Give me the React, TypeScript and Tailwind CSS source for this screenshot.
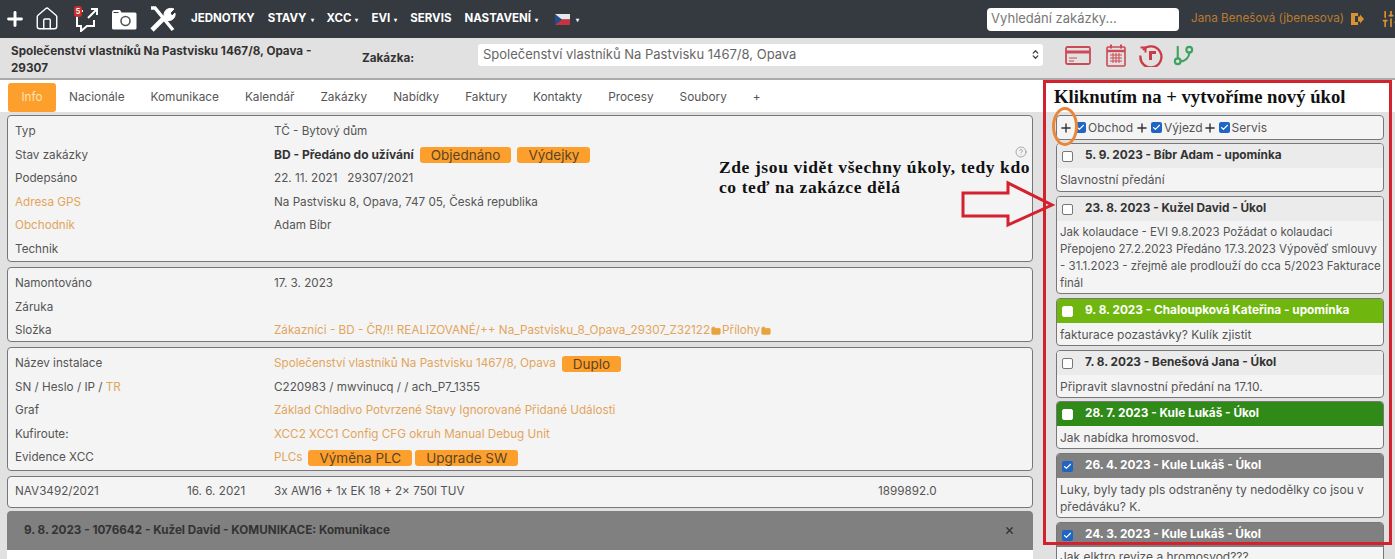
import { Plus, Home, ChevronsUpDown, SlidersVertical, GitBranch, Folder, X, Check, CircleHelp } from "lucide-react"

const NAV = [
  { label: "JEDNOTKY" },
  { label: "STAVY", caret: true },
  { label: "XCC", caret: true },
  { label: "EVI", caret: true },
  { label: "SERVIS" },
  { label: "NASTAVENÍ", caret: true },
]

const TABS = ["Nacionále", "Komunikace", "Kalendář", "Zakázky", "Nabídky", "Faktury", "Kontakty", "Procesy", "Soubory", "+"]

const TASKS = [
  { title: "5. 9. 2023 - Bíbr Adam - upomínka", body: "Slavnostní předání", head: "bg-[#ebebeb] text-[#333]", box: "h-[49px] mb-[1px] text-[12px]" },
  {
    title: "23. 8. 2023 - Kužel David - Úkol",
    body: "Jak kolaudace - EVI 9.8.2023 Požádat o kolaudaci\nPřepojeno 27.2.2023 Předáno 17.3.2023 Výpověď smlouvy\n- 31.1.2023 - zřejmě ale prodlouží do cca 5/2023 Fakturace\nfinál",
    head: "bg-[#ebebeb] text-[#333]",
    box: "h-[98px] mb-[1px] text-[11.5px]",
  },
  { title: "9. 8. 2023 - Chaloupková Kateřina - upomínka", body: "fakturace pozastávky? Kulík zjistit", head: "bg-[#6fb70f] text-white", box: "h-[48px] mb-[1px] text-[12px]", solid: true },
  { title: "7. 8. 2023 - Benešová Jana - Úkol", body: "Připravit slavnostní předání na 17.10.", head: "bg-[#ebebeb] text-[#333]", box: "h-[48px] text-[12px]" },
  { title: "28. 7. 2023 - Kule Lukáš - Úkol", body: "Jak nabídka hromosvod.", head: "bg-[#2f8a17] text-white", box: "h-[48px] mb-[1px] text-[12px]", solid: true },
  { title: "26. 4. 2023 - Kule Lukáš - Úkol", body: "Luky, byly tady pls odstraněny ty nedodělky co jsou v\npředáváku? K.", head: "bg-[#808080] text-white", box: "h-[65px] mb-[1px] text-[12px]", checked: true },
  { title: "24. 3. 2023 - Kule Lukáš - Úkol", body: "Jak elktro revize a hromosvod???", head: "bg-[#808080] text-white", box: "h-[48px] text-[12px]", checked: true, pad: "pt-[1px]" },
]

function Btn({ children, tight }: { children: React.ReactNode; tight?: boolean }) {
  return <span className={`${tight ? "ml-[3px]" : "ml-[6px]"} rounded-[3px] bg-[#fd9f2d] px-[11px] text-[13.5px] leading-[16px] text-[#5a4524]`}>{children}</span>
}

function Row({ label, children }: { label: React.ReactNode; children?: React.ReactNode }) {
  return (
    <div className="flex h-[23.6px] items-center">
      <div className="w-[259px] shrink-0">{label}</div>
      <div className="flex items-center">{children}</div>
    </div>
  )
}

function Panel({ h, children }: { h: string; children: React.ReactNode }) {
  return <div className={`rounded-[4px] border border-[#777] bg-[#f4f4f4] px-[7px] pt-[4px] ${h}`}>{children}</div>
}

function FolderIcon() {
  return <Folder size={10} className="mx-[1px] inline fill-[#e8a33d] text-[#e8a33d]" />
}

function Blue() {
  return (
    <span className="flex h-[11px] w-[11px] shrink-0 items-center justify-center rounded-[2px] bg-[#1f66c4]">
      <Check size={9} strokeWidth={3} className="text-white" />
    </span>
  )
}

function FilterItem({ label, className }: { label: string; className: string }) {
  return (
    <>
      <Plus size={14} strokeWidth={2.4} className={`text-[#333] ${className}`} />
      <span className="ml-[2px]"><Blue /></span>
      <span className="ml-[2px]">{label}</span>
    </>
  )
}

export default function App() {
  return (
    <div className="relative h-[559px] w-[1395px] overflow-hidden bg-[#e1e1e1] text-[11.7px] text-[#555] [font-family:Inter,'Liberation_Sans',sans-serif]">
      {/* Top bar */}
      <div className="flex h-[38px] items-center bg-[#343a40] pl-[4px] text-white">
        <Plus size={22} strokeWidth={3.2} />
        <Home size={26} strokeWidth={1.3} className="ml-[8px]" />
        <div className="relative ml-[14px]">
          <svg width="26" height="26" viewBox="0 0 26 26" fill="none" stroke="#fff" strokeWidth="2">
            <path d="M9 5H3v15h4v5l6-5h7v-6" />
            <path d="M14 12 23 3M17 3h6v6" />
          </svg>
          <span className="absolute left-[0px] top-[0px] flex h-[11px] w-[8px] items-center justify-center rounded-[3px] bg-[#c9302c] text-[7px] font-bold leading-none">5</span>
        </div>
        <svg width="26" height="21" viewBox="0 0 26 21" className="ml-[11px]">
          <path d="M1 3.500 Q1 1 3 1h6l1.500 2.500H24q1.500 0 1.500 1.500V19q0 1.500-1.500 1.500H2.500Q1 20.500 1 19z" fill="#fff" />
          <path d="M2.500 3.500h5" stroke="#343a40" strokeWidth="1" />
          <circle cx="14.500" cy="12" r="4.500" fill="none" stroke="#555" strokeWidth="1.600" />
        </svg>
        <svg width="27" height="27" viewBox="0 0 27 27" className="ml-[12px]" fill="none" stroke="#fff">
          <path d="M2 2l4 0 18 22" strokeWidth="3.400" />
          <path d="M3 24 16 11" strokeWidth="4.600" />
          <path d="M15 9c0-5 5-8 10-6l-4 4 2 3 3-3c1 6-5 9-9 7z" fill="#fff" strokeWidth="1" />
        </svg>
        <nav className="ml-[15px] flex items-center gap-[13px] text-[11.5px] font-bold">
          {NAV.map((n) => (
            <span key={n.label} className="flex items-center gap-[4px]">
              {n.label}
              {n.caret && <span className="text-[6px]">▾</span>}
            </span>
          ))}
          <span className="ml-[4px] flex items-center gap-[6px]">
            <svg width="15" height="11" viewBox="0 0 15 11">
              <rect width="15" height="5.500" fill="#e8e8e8" />
              <rect y="5.500" width="15" height="5.500" fill="#c8323c" />
              <path d="M0 0l7 5.500-7 5.500z" fill="#1d4e8f" />
            </svg>
            <span className="text-[6px]">▾</span>
          </span>
        </nav>
        <div className="ml-auto flex items-center">
          <div className="flex h-[23px] w-[192px] items-center rounded-[4px] bg-white pl-[4px] text-[13px] text-[#777]">Vyhledání zakázky...</div>
          <span className="ml-[12px] text-[11.7px] text-[#b97a30]">Jana Benešová (jbenesova)</span>
          <svg width="14" height="14" viewBox="0 0 14 14" fill="#d9922f" className="ml-[6px]">
            <path d="M1 1h7v3H5v6h3v3H1zM8 4.500h2V2.500l4 4.500-4 4.500v-2H8z" />
          </svg>
          <SlidersVertical size={20} className="ml-[17px] mr-[-6px] text-[#d9922f]" />
        </div>
      </div>

      {/* Job header */}
      <div className="flex h-[42px] items-center border-b-2 border-[#aaa] bg-[#e1e1e1] pl-[11px]">
        <div className="mt-[4px] w-[315px] font-bold leading-[17px] text-[#333]">Společenství vlastníků Na Pastvisku 1467/8, Opava - 29307</div>
        <div className="ml-[36px] mt-[2px] w-[116px] font-bold text-[#333]">Zakázka:</div>
        <div className="mb-[7px] flex h-[22px] w-[565px] items-center justify-between rounded-[3px] bg-white pl-[5px] pr-[2px] text-[13px] text-[#666]">
          Společenství vlastníků Na Pastvisku 1467/8, Opava
          <ChevronsUpDown size={11} className="text-[#444]" strokeWidth={3} />
        </div>
        <div className="mb-[6px] ml-[22px] flex items-center">
          <svg width="26" height="19" viewBox="0 0 26 19" fill="none" stroke="#cc4a55" strokeWidth="1.800">
            <rect x="1" y="1" width="24" height="17" rx="1.500" />
            <path d="M1 6h24" strokeWidth="3" />
            <path d="M4 12h8M4 15h5" strokeWidth="1.200" />
          </svg>
          <svg width="20" height="23" viewBox="0 0 20 23" fill="none" stroke="#cc4a55" strokeWidth="1.600" className="ml-[15px]">
            <rect x="1" y="3" width="18" height="19" rx="1" />
            <path d="M1 7h18" strokeWidth="2.400" />
            <path d="M5 0.500v4M15 0.500v4" strokeWidth="2" />
            <path d="M4 11h12M4 14h12M4 17h12M7 9v10M10 9v10M13 9v10" strokeWidth="1" />
          </svg>
          <svg width="24" height="24" viewBox="0 0 24 24" fill="none" stroke="#cc3a45" strokeWidth="2.300" className="ml-[13px]">
            <path d="M4 7a10.500 10.500 0 1 1-2.500 5.500" />
            <path d="M1.500 4.500h5v5" strokeWidth="2" />
            <path d="M17 9.500h-5.500v7.500" strokeWidth="3" />
          </svg>
          <GitBranch size={23} strokeWidth={2.200} className="ml-[9px] text-[#3da35d]" />
        </div>
      </div>

      {/* Body */}
      <div className="flex">
        <div className="w-[1043px] shrink-0">
          <div className="flex h-[32px] items-end bg-white pl-[8px]">
            <div className="flex h-[29px] w-[48px] items-center justify-center rounded-[3px] bg-[#fd9f2d] text-[#fde2b5]">Info</div>
            <div className="ml-[13px] flex h-[29px] items-center gap-[26px] text-[11.8px] text-[#555]">
              {TABS.map((t) => (
                <span key={t}>{t}</span>
              ))}
            </div>
          </div>
          <div className="flex flex-col gap-[5px] pl-[7px] pr-[10px] pt-[3px]">
            <div className="relative">
              <Panel h="h-[147px]">
                <Row label="Typ">TČ - Bytový dům</Row>
                <Row label="Stav zakázky">
                  <b className="text-[12px] text-[#333]">BD - Předáno do užívání</b>
                  <Btn>Objednáno</Btn>
                  <Btn>Výdejky</Btn>
                </Row>
                <Row label="Podepsáno">22. 11. 2021 &nbsp; 29307/2021</Row>
                <Row label={<span className="text-[#e2a55c]">Adresa GPS</span>}>Na Pastvisku 8, Opava, 747 05, Česká republika</Row>
                <Row label={<span className="text-[#e2a55c]">Obchodník</span>}>Adam Bíbr</Row>
                <Row label="Technik" />
              </Panel>
              <CircleHelp size={12} strokeWidth={1.200} className="absolute right-[6px] top-[31px] text-[#777]" />
            </div>
            <Panel h="h-[75px]">
              <Row label="Namontováno">17. 3. 2023</Row>
              <Row label="Záruka" />
              <Row label="Složka">
                <span className="text-[#e2a55c]">
                  Zákazníci - BD - ČR/!! REALIZOVANÉ/++ Na_Pastvisku_8_Opava_29307_Z32122
                  <FolderIcon />
                  Přílohy
                  <FolderIcon />
                </span>
              </Row>
            </Panel>
            <Panel h="h-[124px]">
              <Row label="Název instalace">
                <span className="text-[#e2a55c]">Společenství vlastníků Na Pastvisku 1467/8, Opava</span>
                <Btn>Duplo</Btn>
              </Row>
              <Row label={<>SN / Heslo / IP / <span className="text-[#e2a55c]">TR</span></>}>C220983 / mwvinucq / / ach_P7_1355</Row>
              <Row label="Graf">
                <span className="text-[#e2a55c]">Základ Chladivo Potvrzené Stavy Ignorované Přidané Události</span>
              </Row>
              <Row label="Kufiroute:">
                <span className="text-[#e2a55c]">XCC2 XCC1 Config CFG okruh Manual Debug Unit</span>
              </Row>
              <Row label="Evidence XCC">
                <span className="text-[#e2a55c]">PLCs</span>
                <Btn>Výměna PLC</Btn>
                <Btn tight>Upgrade SW</Btn>
              </Row>
            </Panel>
            <div className="flex h-[32px] items-center rounded-[4px] border border-[#777] bg-[#f4f4f4] px-[7px]">
              <span className="w-[172px]">NAV3492/2021</span>
              <span className="w-[87px]">16. 6. 2021</span>
              <span className="w-[604px]">3x AW16 + 1x EK 18 + 2x 750l TUV</span>
              <span>1899892.0</span>
            </div>
            <div className="-mt-[2px] rounded-t-[4px] bg-white">
              <div className="flex h-[39px] items-center justify-between rounded-t-[4px] bg-[#808080] pl-[17px] pr-[18px] font-bold text-[#333]">
                9. 8. 2023 - 1076642 - Kužel David - KOMUNIKACE: Komunikace
                <X size={11} strokeWidth={3} />
              </div>
              <div className="h-[20px]" />
            </div>
          </div>
        </div>

        {/* Tasks */}
        <div className="min-w-0 flex-1">
          <div className="h-[32px] bg-white" />
          <div className="flex h-[447px] w-[341px] flex-col gap-[3px] overflow-hidden pl-[13px] pt-[3px]">
            <div className="flex h-[25px] w-[328px] shrink-0 items-center rounded-[4px] border border-[#777] bg-[#f4f4f4] pl-[2px] text-[12px]">
              <FilterItem label="Obchod" className="" />
              <FilterItem label="Výjezd" className="ml-[2px]" />
              <FilterItem label="Servis" className="" />
            </div>
            {TASKS.map((t) => (
              <div key={t.title} className={`w-[328px] shrink-0 overflow-hidden rounded-[4px] border border-[#777] bg-[#f4f4f4] ${t.box}`}>
                <div className={`flex h-[24px] items-center pl-[5px] text-[11.8px] font-bold ${t.head}`}>
                  {t.checked ? (
                    <Blue />
                  ) : (
                    <span className={`h-[11px] w-[11px] shrink-0 rounded-[2px] border ${t.solid ? "border-white bg-white" : "border-[#777] bg-white"}`} />
                  )}
                  <span className="ml-[12px]">{t.title}</span>
                </div>
                <div className={`whitespace-pre px-[3px] leading-[17px] ${t.pad ?? "pt-[3px]"}`}>{t.body}</div>
              </div>
            ))}
          </div>
        </div>
      </div>

      {/* Annotations */}
      <div className="pointer-events-none absolute left-[1043px] top-[80px] h-[465px] w-[349px] border-[3px] border-[#d3212d]" />
      <div className="absolute left-[1054px] top-[85px] text-[18.7px] font-bold leading-[24px] text-[#111] [font-family:'Liberation_Serif',serif]">Kliknutím na + vytvoříme nový úkol</div>
      <div className="pointer-events-none absolute left-[1052px] top-[107px] h-[39px] w-[26px] rounded-[50%] border-[3px] border-[#e8873a]" />
      <div className="absolute left-[719px] top-[157px] whitespace-nowrap text-[17.5px] font-bold leading-[20px] tracking-[0.6px] text-[#111] [font-family:'Liberation_Serif',serif]">
        Zde jsou vidět všechny úkoly, tedy kdo
        <br />
        co teď na zakázce dělá
      </div>
      <svg className="absolute left-[960px] top-[180px]" width="96" height="48" viewBox="0 0 96 48" fill="none" stroke="#d3212d" strokeWidth="3">
        <path d="M3 13h45V3l44 22-44 20V36H3z" />
      </svg>
    </div>
  )
}
